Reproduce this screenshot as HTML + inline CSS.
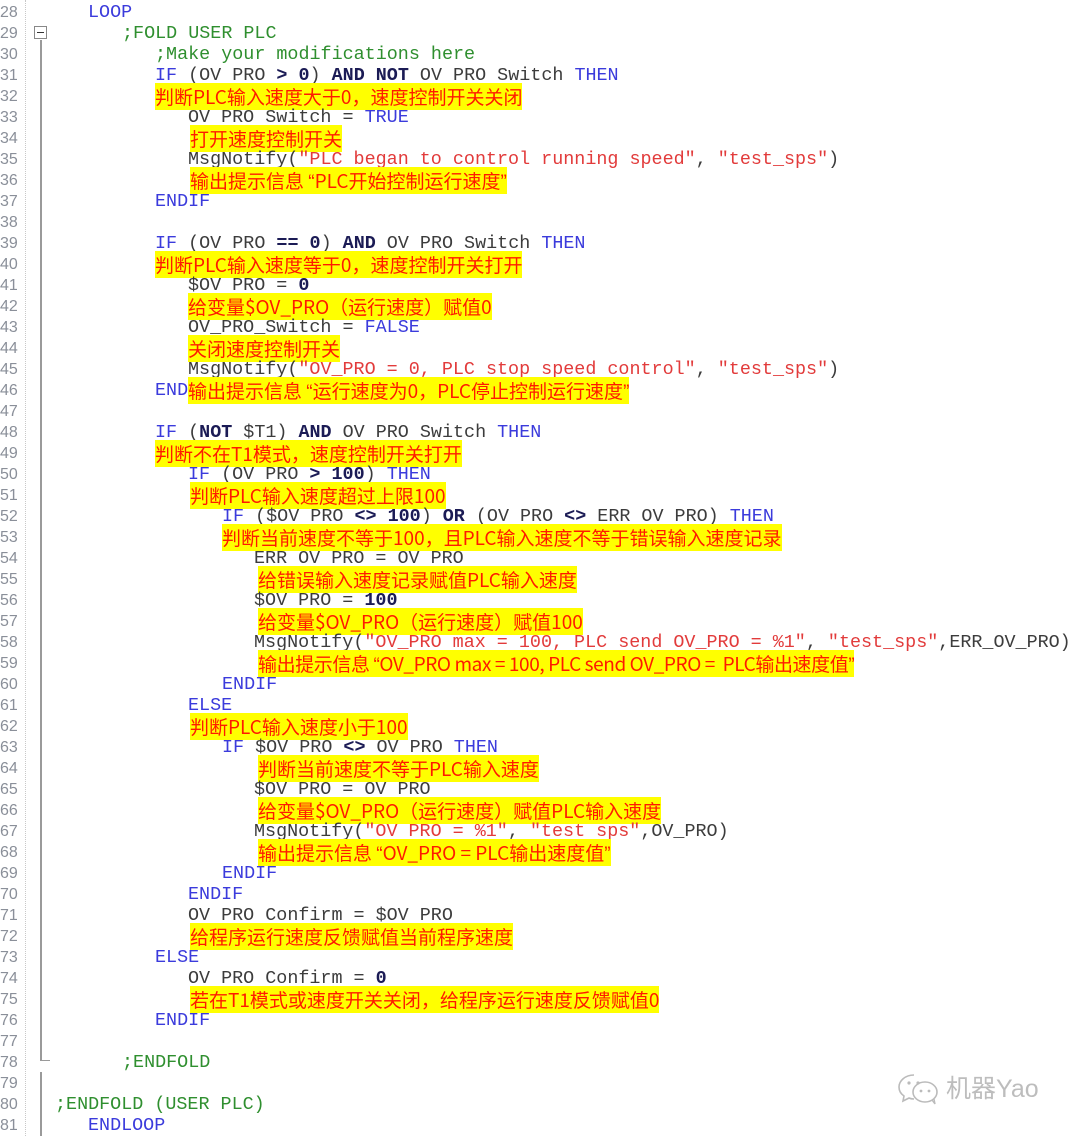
<!DOCTYPE html>
<html><head><meta charset="utf-8">
<style>
html,body{margin:0;padding:0;background:#fff;}
body{width:1080px;height:1136px;position:relative;overflow:hidden;}
.ln{position:absolute;left:0;width:23px;text-align:left;font:16px "Liberation Sans",sans-serif;color:#8a8f99;line-height:21px;height:21px;}
.r{position:absolute;white-space:pre;font:18.4px "Liberation Mono",monospace;color:#3c3c3c;line-height:21px;height:21px;}
.k{color:#3b3bdc;}
.b{color:#1b1b55;font-weight:bold;}
.s{color:#e23b3b;}
.c{color:#2f8f2f;}
.z{position:absolute;white-space:pre;font:19px "Noto Sans CJK SC","Liberation Sans",sans-serif;color:#ff1a00;line-height:21px;height:21px;}
.z span{background:#ffff00;}
.z .q{font-family:"Liberation Sans",sans-serif;}
</style></head><body>
<div style="position:absolute;left:25px;top:0;width:0;height:1136px;border-left:1px dotted #c8c8c8"></div>
<div style="position:absolute;left:40px;top:40px;width:2px;height:1021px;background:#9a9a9a"></div>
<div style="position:absolute;left:40px;top:1060px;width:10px;height:1px;background:#9a9a9a"></div>
<div style="position:absolute;left:40px;top:1072px;width:2px;height:64px;background:#9a9a9a"></div>
<div style="position:absolute;left:34px;top:26px;width:11px;height:11px;border:1px solid #888;background:#fff"><div style="position:absolute;left:2px;top:5px;width:7px;height:1px;background:#333"></div></div>

<div class="ln" style="top:2px">28</div><div class="ln" style="top:23px">29</div><div class="ln" style="top:44px">30</div><div class="ln" style="top:65px">31</div><div class="ln" style="top:86px">32</div><div class="ln" style="top:107px">33</div><div class="ln" style="top:128px">34</div><div class="ln" style="top:149px">35</div><div class="ln" style="top:170px">36</div><div class="ln" style="top:191px">37</div><div class="ln" style="top:212px">38</div><div class="ln" style="top:233px">39</div><div class="ln" style="top:254px">40</div><div class="ln" style="top:275px">41</div><div class="ln" style="top:296px">42</div><div class="ln" style="top:317px">43</div><div class="ln" style="top:338px">44</div><div class="ln" style="top:359px">45</div><div class="ln" style="top:380px">46</div><div class="ln" style="top:401px">47</div><div class="ln" style="top:422px">48</div><div class="ln" style="top:443px">49</div><div class="ln" style="top:464px">50</div><div class="ln" style="top:485px">51</div><div class="ln" style="top:506px">52</div><div class="ln" style="top:527px">53</div><div class="ln" style="top:548px">54</div><div class="ln" style="top:569px">55</div><div class="ln" style="top:590px">56</div><div class="ln" style="top:611px">57</div><div class="ln" style="top:632px">58</div><div class="ln" style="top:653px">59</div><div class="ln" style="top:674px">60</div><div class="ln" style="top:695px">61</div><div class="ln" style="top:716px">62</div><div class="ln" style="top:737px">63</div><div class="ln" style="top:758px">64</div><div class="ln" style="top:779px">65</div><div class="ln" style="top:800px">66</div><div class="ln" style="top:821px">67</div><div class="ln" style="top:842px">68</div><div class="ln" style="top:863px">69</div><div class="ln" style="top:884px">70</div><div class="ln" style="top:905px">71</div><div class="ln" style="top:926px">72</div><div class="ln" style="top:947px">73</div><div class="ln" style="top:968px">74</div><div class="ln" style="top:989px">75</div><div class="ln" style="top:1010px">76</div><div class="ln" style="top:1031px">77</div><div class="ln" style="top:1052px">78</div><div class="ln" style="top:1073px">79</div><div class="ln" style="top:1094px">80</div><div class="ln" style="top:1115px">81</div>

<div class="r k" style="left:88px;top:2px">LOOP</div>
<div class="r c" style="left:122px;top:23px">;FOLD USER PLC</div>
<div class="r c" style="left:155px;top:44px">;Make your modifications here</div>
<div class="r" style="left:155px;top:65px"><span class="k">IF</span> (OV PRO <span class="b">&gt;</span> <span class="b">0</span>) <span class="b">AND NOT</span> OV PRO Switch <span class="k">THEN</span></div>
<div class="z" style="left:155px;top:86px"><span>判断PLC输入速度大于0，速度控制开关关闭</span></div>
<div class="r" style="left:188px;top:107px">OV PRO Switch = <span class="k">TRUE</span></div>
<div class="z" style="left:190px;top:128px"><span>打开速度控制开关</span></div>
<div class="r" style="left:188px;top:149px">MsgNotify(<span class="s">"PLC began to control running speed"</span>, <span class="s">"test_sps"</span>)</div>
<div class="z" style="left:190px;top:170px"><span>输出提示信息 <span class="q">“</span>PLC开始控制运行速度<span class="q">”</span></span></div>
<div class="r k" style="left:155px;top:191px">ENDIF</div>
<div class="r" style="left:155px;top:233px"><span class="k">IF</span> (OV PRO <span class="b">==</span> <span class="b">0</span>) <span class="b">AND</span> OV PRO Switch <span class="k">THEN</span></div>
<div class="z" style="left:155px;top:254px"><span>判断PLC输入速度等于0，速度控制开关打开</span></div>
<div class="r" style="left:188px;top:275px">$OV PRO = <span class="b">0</span></div>
<div class="z" style="left:188px;top:296px"><span>给变量$OV_PRO（运行速度）赋值0</span></div>
<div class="r" style="left:188px;top:317px">OV_PRO_Switch = <span class="k">FALSE</span></div>
<div class="z" style="left:188px;top:338px"><span>关闭速度控制开关</span></div>
<div class="r" style="left:188px;top:359px">MsgNotify(<span class="s">"OV_PRO = 0, PLC stop speed control"</span>, <span class="s">"test_sps"</span>)</div>
<div class="r k" style="left:155px;top:380px">END</div>
<div class="z" style="left:188px;top:380px"><span>输出提示信息 <span class="q">“</span>运行速度为0，PLC停止控制运行速度<span class="q">”</span></span></div>
<div class="r" style="left:155px;top:422px"><span class="k">IF</span> (<span class="b">NOT</span> $T1) <span class="b">AND</span> OV PRO Switch <span class="k">THEN</span></div>
<div class="z" style="left:155px;top:443px"><span>判断不在T1模式，速度控制开关打开</span></div>
<div class="r" style="left:188px;top:464px"><span class="k">IF</span> (OV PRO <span class="b">&gt;</span> <span class="b">100</span>) <span class="k">THEN</span></div>
<div class="z" style="left:190px;top:485px"><span>判断PLC输入速度超过上限100</span></div>
<div class="r" style="left:222px;top:506px"><span class="k">IF</span> ($OV PRO <span class="b">&lt;&gt;</span> <span class="b">100</span>) <span class="b">OR</span> (OV PRO <span class="b">&lt;&gt;</span> ERR OV PRO) <span class="k">THEN</span></div>
<div class="z" style="left:222px;top:527px"><span>判断当前速度不等于100，且PLC输入速度不等于错误输入速度记录</span></div>
<div class="r" style="left:254px;top:548px">ERR OV PRO = OV PRO</div>
<div class="z" style="left:258px;top:569px"><span>给错误输入速度记录赋值PLC输入速度</span></div>
<div class="r" style="left:254px;top:590px">$OV PRO = <span class="b">100</span></div>
<div class="z" style="left:258px;top:611px"><span>给变量$OV_PRO（运行速度）赋值100</span></div>
<div class="r" style="left:254px;top:632px">MsgNotify(<span class="s">"OV_PRO max = 100, PLC send OV_PRO = %1"</span>, <span class="s">"test_sps"</span>,ERR_OV_PRO)</div>
<div class="z" style="left:258px;top:653px;letter-spacing:-0.4px"><span>输出提示信息 <span class="q">“</span>OV_PRO max = 100, PLC send OV_PRO =  PLC输出速度值<span class="q">”</span></span></div>
<div class="r k" style="left:222px;top:674px">ENDIF</div>
<div class="r k" style="left:188px;top:695px">ELSE</div>
<div class="z" style="left:190px;top:716px"><span>判断PLC输入速度小于100</span></div>
<div class="r" style="left:222px;top:737px"><span class="k">IF</span> $OV PRO <span class="b">&lt;&gt;</span> OV PRO <span class="k">THEN</span></div>
<div class="z" style="left:258px;top:758px"><span>判断当前速度不等于PLC输入速度</span></div>
<div class="r" style="left:254px;top:779px">$OV PRO = OV PRO</div>
<div class="z" style="left:258px;top:800px"><span>给变量$OV_PRO（运行速度）赋值PLC输入速度</span></div>
<div class="r" style="left:254px;top:821px">MsgNotify(<span class="s">"OV PRO = %1"</span>, <span class="s">"test sps"</span>,OV_PRO)</div>
<div class="z" style="left:258px;top:842px"><span>输出提示信息 <span class="q">“</span>OV_PRO = PLC输出速度值<span class="q">”</span></span></div>
<div class="r k" style="left:222px;top:863px">ENDIF</div>
<div class="r k" style="left:188px;top:884px">ENDIF</div>
<div class="r" style="left:188px;top:905px">OV PRO Confirm = $OV PRO</div>
<div class="z" style="left:190px;top:926px"><span>给程序运行速度反馈赋值当前程序速度</span></div>
<div class="r k" style="left:155px;top:947px">ELSE</div>
<div class="r" style="left:188px;top:968px">OV PRO Confirm = <span class="b">0</span></div>
<div class="z" style="left:190px;top:989px"><span>若在T1模式或速度开关关闭，给程序运行速度反馈赋值0</span></div>
<div class="r k" style="left:155px;top:1010px">ENDIF</div>
<div class="r c" style="left:122px;top:1052px">;ENDFOLD</div>
<div class="r c" style="left:55px;top:1094px">;ENDFOLD (USER PLC)</div>
<div class="r k" style="left:88px;top:1115px">ENDLOOP</div>

<svg style="position:absolute;left:897px;top:1072px" width="46" height="34" viewBox="0 0 46 34">
<path d="M17 3C8 3 2 9 2 15c0 4 2 7 5 9l-1 5 6-3c2 1 4 1 5 1" fill="none" stroke="#bbb" stroke-width="1.6"/>
<ellipse cx="28" cy="20" rx="12" ry="10" fill="none" stroke="#bbb" stroke-width="1.6"/>
<path d="M35 28l3 4-1-5" fill="none" stroke="#bbb" stroke-width="1.4"/>
<circle cx="12" cy="11" r="1.6" fill="#bbb"/><circle cx="21" cy="11" r="1.6" fill="#bbb"/>
<circle cx="24" cy="19" r="1.4" fill="#bbb"/><circle cx="32" cy="19" r="1.4" fill="#bbb"/>
</svg>
<div style="position:absolute;left:946px;top:1074px;font:25px 'Liberation Sans','Noto Sans CJK SC',sans-serif;color:#bdbdbd;line-height:30px;white-space:pre">机器Yao</div>
</body></html>
